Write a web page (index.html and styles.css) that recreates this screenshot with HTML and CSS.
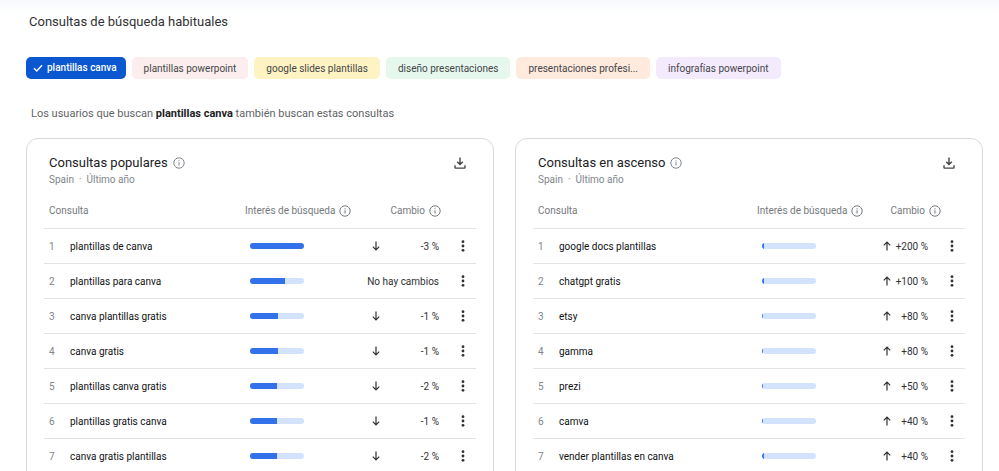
FILE: index.html
```html
<!DOCTYPE html>
<html lang="es">
<head>
<meta charset="utf-8">
<meta name="viewport" content="width=device-width, initial-scale=1">
<title>Consultas de búsqueda habituales</title>
<link rel="stylesheet" href="styles.css">
</head>
<body>
<svg class="sprite" aria-hidden="true">
  <symbol id="info" viewBox="0 0 12 12"><circle cx="6" cy="6" r="5.2" fill="none" stroke="currentColor"/><path d="M6 5.3v3.2M6 3.3v1.1" stroke="currentColor" fill="none"/></symbol>
  <symbol id="download" viewBox="0 0 12 12"><path d="M6 .5v6.8M3.2 4.7 6 7.5l2.8-2.8M1 8.3v2.2q0 .6.6.6h8.8q.6 0 .6-.6V8.3" fill="none" stroke="currentColor" stroke-width="1.4"/></symbol>
  <symbol id="up" viewBox="0 0 10 10"><path d="M5 9.5V1.2M1.8 4.4 5 1.2l3.2 3.2" fill="none" stroke="currentColor" stroke-width="1.2"/></symbol>
  <symbol id="down" viewBox="0 0 10 10"><path d="M5 .5v8.3M1.8 5.6 5 8.8l3.2-3.2" fill="none" stroke="currentColor" stroke-width="1.2"/></symbol>
  <symbol id="more" viewBox="0 0 12 12"><g fill="currentColor"><circle cx="6" cy="1.7" r="1.4"/><circle cx="6" cy="6" r="1.4"/><circle cx="6" cy="10.3" r="1.4"/></g></symbol>
</svg>
<main class="page">
  <h1 class="title">Consultas de búsqueda habituales</h1>
  <div class="chips">
    <button class="chip chip-selected" aria-pressed="true"><svg class="check" viewBox="0 0 10 10" aria-hidden="true"><path d="M1 5.2 3.8 8 9 2.3" fill="none" stroke="currentColor" stroke-width="1.4"/></svg>plantillas canva</button>
    <button class="chip chip-pink">plantillas powerpoint</button>
    <button class="chip chip-yellow">google slides plantillas</button>
    <button class="chip chip-green">diseño presentaciones</button>
    <button class="chip chip-orange">presentaciones profesi...</button>
    <button class="chip chip-purple">infografías powerpoint</button>
  </div>
  <p class="intro">Los usuarios que buscan <strong>plantillas canva</strong> también buscan estas consultas</p>
  <div class="cards" id="cards"></div>
</main>
<script src="script.js"></script>
</body>
</html>
```
FILE: styles.css
```css
* { box-sizing: border-box; }

body {
  margin: 0;
  height: 100vh;
  overflow: hidden;
  background: linear-gradient(#f6f8fc, #fff 14px);
  color: #303134;
  font-family: "Google Sans", Roboto, sans-serif;
  font-size: 10px;
  line-height: 16px;
}

button {
  border: 0;
  padding: 0;
  background: none;
  color: inherit;
  font: inherit;
  cursor: pointer;
}

svg { display: block; }
.sprite { position: absolute; width: 0; height: 0; }
.icon { width: 12px; height: 12px; flex: none; }

.page { padding: 12px 16px 0 26px; }

.title {
  margin: 0 0 25px 3px;
  font-size: 13px;
  line-height: 20px;
  font-weight: 400;
}

.chips { display: flex; gap: 6px; }

.chip {
  display: flex;
  align-items: center;
  gap: 4px;
  height: 22px;
  padding: 1px 12px 0;
  border-radius: 5px;
  color: #444649;
  white-space: nowrap;
}

.check { width: 10px; height: 10px; }
.chip-selected { padding: 0 9px 0 7px; background: #0b57d0; color: #fff; font-weight: 500; }
.chip-pink { background: #fceeee; }
.chip-yellow { background: #fef3c3; }
.chip-green { background: #e6f8ed; }
.chip-orange { background: #ffeadd; }
.chip-purple { background: #f4eafd; }

.intro {
  margin: 25px 0 14px 5px;
  color: #5f6368;
  font-size: 11px;
  line-height: 20px;
}
.intro strong { color: #202124; font-weight: 700; }

.cards {
  display: grid;
  grid-template-columns: 1fr 1fr;
  gap: 21px;
}

.card {
  padding: 14px 17px 24px;
  border: 1px solid #d5dadd;
  border-radius: 12px;
  background: #fff;
}

.card-head {
  display: flex;
  justify-content: space-between;
  align-items: flex-start;
  padding: 0 10px 0 5px;
}
.card-title { display: flex; align-items: center; gap: 5px; }
.card-title h2 { margin: 0; font-size: 13px; line-height: 20px; font-weight: 400; color: #202124; }
.card-title button { color: #80868b; }
.card-sub { margin: 0; color: #80868b; line-height: 14px; }
.download { padding: 4px 0; color: #444746; }

.table {
  width: 100%;
  margin-top: 6px;
  border-collapse: separate;
  border-spacing: 0;
  table-layout: fixed;
}
.table th, .table td {
  height: 35px;
  padding: 0;
  border-bottom: 1px solid #e1e4e6;
  text-align: left;
  white-space: nowrap;
}
.table th { height: 36px; color: #75797e; font-weight: 400; }
.table .first { padding-left: 5px; }
.table .rank { padding: 2px 0 0 5px; color: #80868b; }
.table .query { padding-top: 2px; color: #111214; }

.col-rank { width: 26px; }
.popular .col-interest { width: 115px; }
.popular .col-change { width: 90px; }
.popular .col-menu { width: 26px; }
.rising .col-interest { width: 108px; }
.rising .col-change { width: 76px; }
.rising .col-menu { width: 24px; }

.label { display: flex; align-items: center; gap: 4px; }
.label svg { width: 12px; height: 12px; }
.label-change { justify-content: flex-end; }
.popular .label-change { padding-right: 9px; }

.bar {
  width: 54px;
  height: 6px;
  margin-left: 5px;
  overflow: hidden;
  border-radius: 3px;
  background: #d3e3fd;
}
.fill { height: 100%; background: #3271ea; }

.change {
  display: flex;
  align-items: center;
  justify-content: space-between;
  width: fit-content;
  margin-left: auto;
}
.change svg { width: 10px; height: 10px; }
.change span { margin-left: auto; padding-top: 2px; }
.popular .change { min-width: 68px; margin-right: 11px; }
.rising .change { min-width: 46px; margin-right: 13px; }
.more { display: block; margin-left: auto; }
.popular .more, .rising .more { margin-right: 7px; }
```
FILE: script.js
```js
const tables = [
  { kind: "popular", title: "Consultas populares", rows: [
    ["plantillas de canva", 100, "down", "-3 %"],
    ["plantillas para canva", 64, "", "No hay cambios"],
    ["canva plantillas gratis", 51, "down", "-1 %"],
    ["canva gratis", 51, "down", "-1 %"],
    ["plantillas canva gratis", 50, "down", "-2 %"],
    ["plantillas gratis canva", 50, "down", "-1 %"],
    ["canva gratis plantillas", 50, "down", "-2 %"]
  ] },
  { kind: "rising", title: "Consultas en ascenso", rows: [
    ["google docs plantillas", 3, "up", "+200 %"],
    ["chatgpt gratis", 3, "up", "+100 %"],
    ["etsy", 2, "up", "+80 %"],
    ["gamma", 2, "up", "+80 %"],
    ["prezi", 2, "up", "+50 %"],
    ["camva", 2, "up", "+40 %"],
    ["vender plantillas en canva", 3, "up", "+40 %"]
  ] }
];

const icon = id => `<svg class="icon" aria-hidden="true"><use href="#${id}"/></svg>`;

const row = ([query, share, direction, change], i) => `
  <tr>
    <td class="rank">${i + 1}</td>
    <td class="query">${query}</td>
    <td><div class="bar"><div class="fill" style="width:${share}%"></div></div></td>
    <td><div class="change">${direction ? icon(direction) : ""}<span>${change}</span></div></td>
    <td><button class="more" aria-label="Más acciones">${icon("more")}</button></td>
  </tr>`;

document.getElementById("cards").innerHTML = tables.map(t => `
  <section class="card ${t.kind}">
    <div class="card-head">
      <div>
        <div class="card-title"><h2>${t.title}</h2><button aria-label="Información">${icon("info")}</button></div>
        <p class="card-sub">Spain &nbsp;·&nbsp; Último año</p>
      </div>
      <button class="download" aria-label="Descargar">${icon("download")}</button>
    </div>
    <table class="table">
      <colgroup><col class="col-rank"><col><col class="col-interest"><col class="col-change"><col class="col-menu"></colgroup>
      <thead><tr>
        <th class="first" colspan="2">Consulta</th>
        <th><div class="label">Interés de búsqueda ${icon("info")}</div></th>
        <th><div class="label label-change">Cambio ${icon("info")}</div></th>
        <th></th>
      </tr></thead>
      <tbody>${t.rows.map(row).join("")}</tbody>
    </table>
  </section>`).join("");
```
